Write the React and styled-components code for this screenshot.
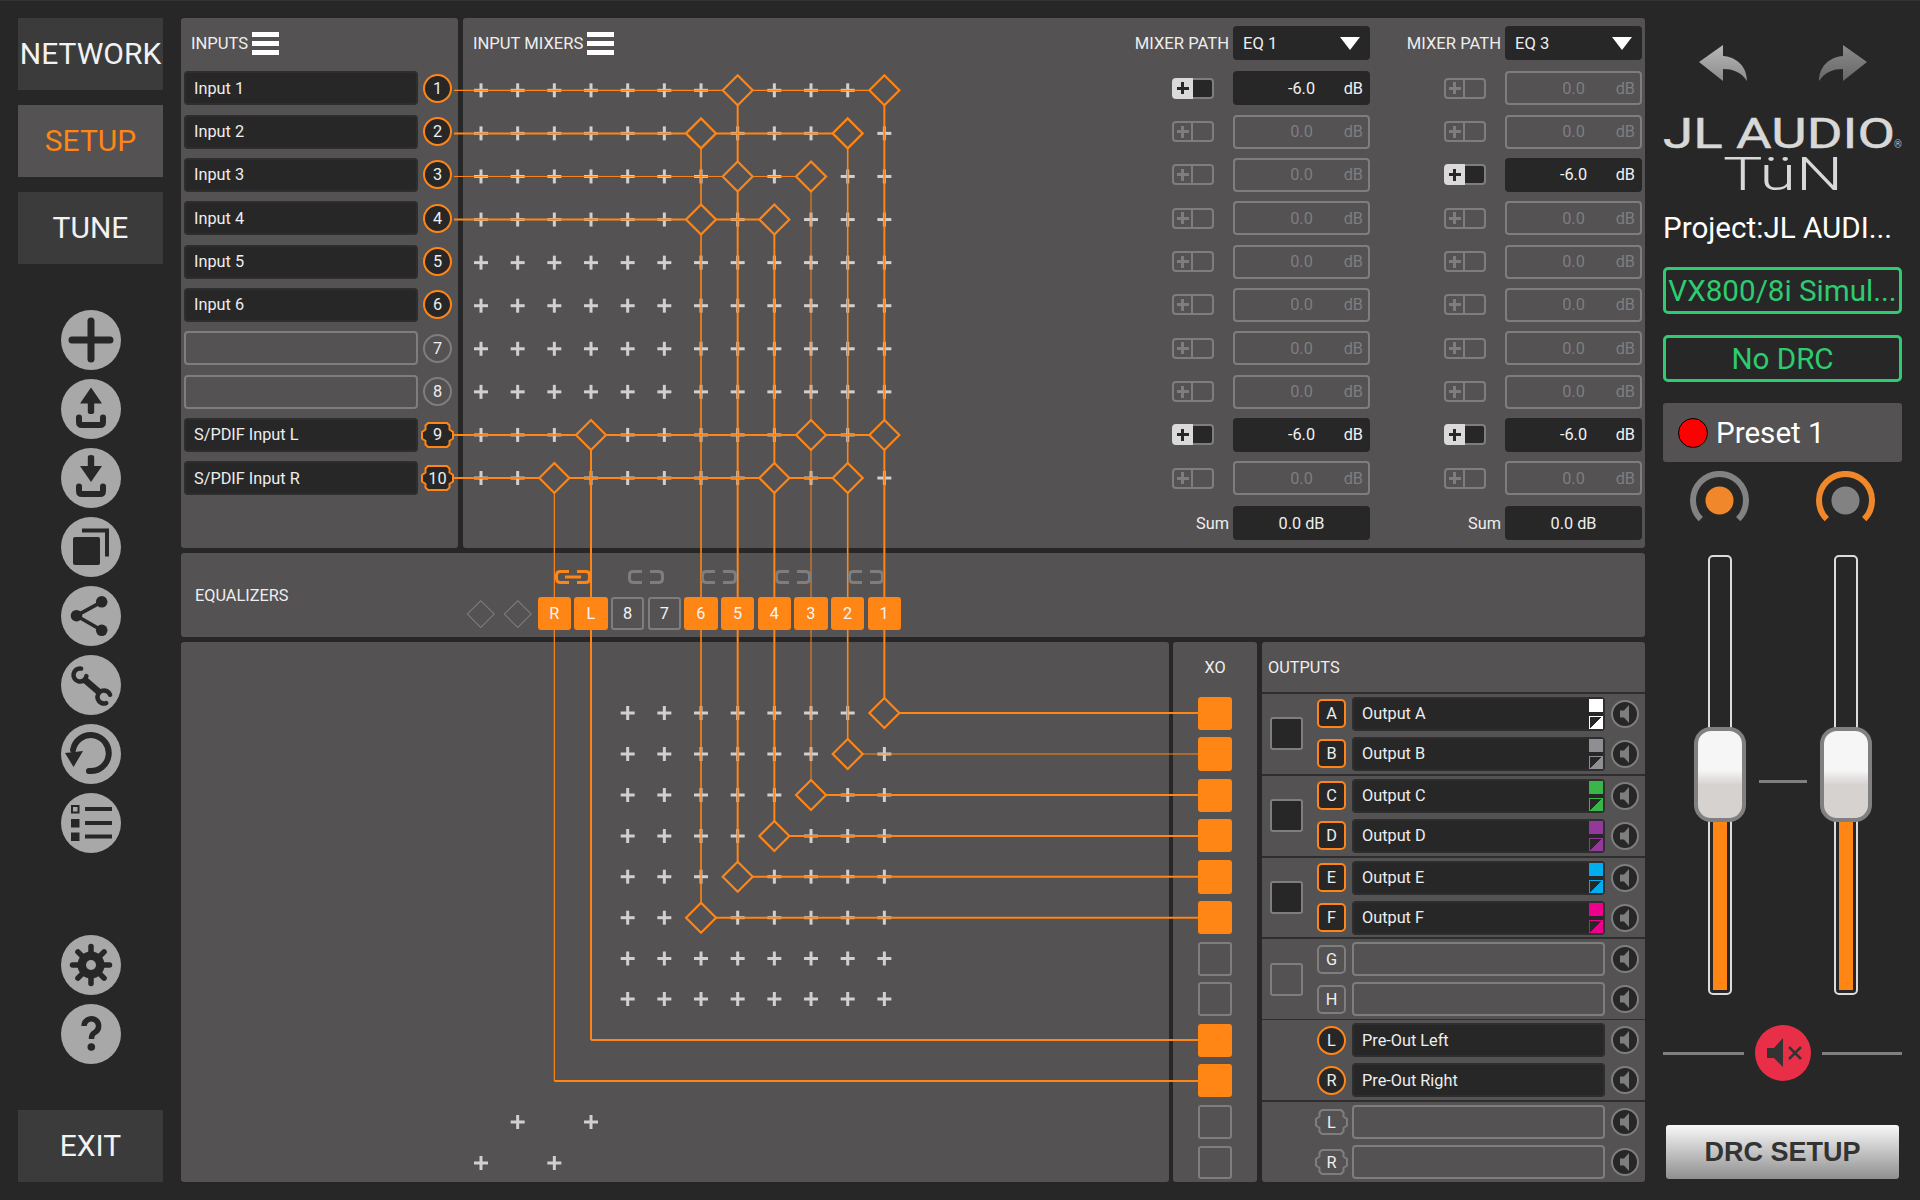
import React from "react";
import styled, { createGlobalStyle } from "styled-components";

const ORANGE = "#ff8515";
const GREY = "#7f7e7e";
const DARK = "#272727";
const PANEL = "#545253";

const GlobalStyle = createGlobalStyle`
  html, body {
    margin: 0;
    padding: 0;
    background: ${DARK};
  }
  * {
    box-sizing: border-box;
  }
`;

const Page = styled.div`
  position: relative;
  width: 1920px;
  height: 1200px;
  padding: 18px;
  display: grid;
  grid-template-columns: 145px 1464px 239px;
  column-gap: 18px;
  background: ${DARK};
  border-top: 1px solid #333;
  font-family: Roboto, "Liberation Sans", sans-serif;
  font-size: 16.3px;
  color: #eee;
  overflow: hidden;
`;

/* left column */
const NavColumn = styled.div`
  display: flex;
  flex-direction: column;
  margin-top: -1px;
`;

const NavTab = styled.div`
  height: 72px;
  margin-bottom: 15px;
  padding-bottom: 2px;
  display: flex;
  align-items: center;
  justify-content: center;
  background: ${(p) => (p.$active ? PANEL : "#3c3b3b")};
  color: ${(p) => (p.$active ? ORANGE : "#f2f2f2")};
  font-size: 30px;
`;

const IconStack = styled.div`
  display: flex;
  flex-direction: column;
  align-items: center;
  gap: 9px;
  margin-top: ${(p) => p.$top}px;
`;

const RoundIcon = styled.svg`
  display: block;
  width: 60px;
  height: 60px;
  border-radius: 50%;
  background: #a8a8a8;
`;

const ExitTab = styled(NavTab)`
  margin: auto 0 0;
`;

/* centre column */
const Centre = styled.div`
  display: grid;
  grid-template-rows: 530px 84px 540px;
  row-gap: 5px;
  margin-top: -1px;
`;

const TopRow = styled.div`
  display: grid;
  grid-template-columns: 277px 1fr;
  column-gap: 5px;
`;

const BottomRow = styled.div`
  display: grid;
  grid-template-columns: 988px 84px 1fr;
  column-gap: 4px;
`;

const Panel = styled.section`
  background: ${PANEL};
  border-radius: 3px;
`;

const InputsPanel = styled(Panel)`
  padding: 0 3px;
`;

const PanelHeader = styled.div`
  height: 53.34px;
  padding: 8px 0 11.34px 7px;
  display: flex;
  align-items: center;
  gap: 4px;
  font-size: 16.6px;
`;

const Burger = styled.span`
  display: block;
  width: 27px;
  height: 23px;
  background: linear-gradient(
    #fff 0 5px,
    transparent 5px 9px,
    #fff 9px 14px,
    transparent 14px 18px,
    #fff 18px 23px
  );
`;

const RowList = styled.div`
  display: grid;
  grid-auto-rows: 34px;
  row-gap: 9.33px;
`;

const InputRow = styled.div`
  display: grid;
  grid-template-columns: 234px 29px;
  column-gap: 5px;
  align-items: center;
`;

const NameField = styled.div`
  height: 34px;
  display: flex;
  align-items: center;
  padding-left: ${(p) => (p.$filled ? 8 : 0)}px;
  border-radius: 4px;
  background: ${(p) => (p.$filled ? DARK : "transparent")};
  border: 2px solid ${(p) => (p.$filled ? "#2e2e2e" : GREY)};
`;

const BadgeCell = styled.div`
  width: 29px;
  height: 29px;
  display: flex;
  align-items: center;
  justify-content: center;
`;

const CircleBadge = styled.div`
  flex: none;
  width: 29px;
  height: 29px;
  display: flex;
  align-items: center;
  justify-content: center;
  border-radius: ${(p) => (p.$square ? "5px" : "50%")};
  border: 2px solid ${(p) => (p.$on ? ORANGE : GREY)};
  background: ${(p) => (p.$on ? DARK : "transparent")};
`;

const NotchWrap = styled.div`
  flex: none;
  position: relative;
  width: 33px;
  height: 26px;
  display: flex;
  align-items: center;
  justify-content: center;
`;

const NotchShape = styled.svg`
  position: absolute;
  inset: 0;
`;

const NotchText = styled.span`
  position: relative;
`;

const MixerPanel = styled(Panel)`
  display: flex;
  justify-content: flex-end;
  gap: 38px;
  padding: 8px 3px 0 10px;
`;

const MixerTitle = styled.div`
  flex: 1;
  height: 34px;
  display: flex;
  align-items: center;
  gap: 4px;
  font-size: 16.6px;
`;

const PathColumn = styled.div`
  width: 234px;
  display: flex;
  flex-direction: column;
`;

const PathHeader = styled.div`
  height: 34px;
  margin-bottom: 11.34px;
  display: flex;
  align-items: center;
  justify-content: flex-end;
  gap: 4px;
  font-size: 16.6px;
  white-space: nowrap;
`;

const PathSelect = styled.div`
  flex: none;
  width: 137px;
  height: 34px;
  padding: 0 10px;
  display: flex;
  align-items: center;
  justify-content: space-between;
  background: ${DARK};
  border-radius: 4px;
`;

const Caret = styled.span`
  width: 0;
  height: 0;
  border-left: 10px solid transparent;
  border-right: 10px solid transparent;
  border-top: 13px solid #fff;
`;

const MixRow = styled.div`
  display: flex;
  align-items: center;
  justify-content: flex-end;
  gap: 19px;
`;

const Toggle = styled.div`
  width: 42px;
  height: 21px;
  display: flex;
`;

const ToggleKnob = styled.span`
  position: relative;
  width: 21px;
  height: 100%;
  border: 2px solid ${(p) => (p.$on ? "#dadada" : GREY)};
  border-radius: 4px 0 0 4px;
  background: ${(p) => (p.$on ? "#dadada" : "transparent")};
  &::before,
  &::after {
    content: "";
    position: absolute;
    background: ${(p) => (p.$on ? DARK : GREY)};
  }
  &::before {
    left: 2.5px;
    right: 2.5px;
    top: 7px;
    height: 3px;
  }
  &::after {
    top: 2.5px;
    bottom: 2.5px;
    left: 7px;
    width: 3px;
  }
`;

const ToggleTail = styled.span`
  flex: 1;
  border: 2px solid ${GREY};
  border-left: none;
  border-radius: 0 4px 4px 0;
  background: ${(p) => (p.$on ? DARK : "transparent")};
`;

const DbBox = styled.div`
  width: 137px;
  height: 34px;
  padding: 0 5px;
  display: grid;
  grid-template-columns: 1fr auto 1fr;
  align-items: center;
  border-radius: 4px;
  background: ${(p) => (p.$on ? DARK : "transparent")};
  border: 2px solid ${(p) => (p.$on ? DARK : GREY)};
  color: ${(p) => (p.$on ? "#f2f2f2" : GREY)};
`;

const DbUnit = styled.span`
  justify-self: end;
`;

const SumRow = styled.div`
  margin-top: 11px;
  display: flex;
  align-items: center;
  justify-content: flex-end;
  gap: 4px;
`;

const SumBox = styled.div`
  width: 137px;
  height: 34px;
  display: flex;
  align-items: center;
  justify-content: center;
  background: ${DARK};
  border-radius: 4px;
`;

/* equalizer strip */
const EqPanel = styled(Panel)`
  display: flex;
`;

const EqLabel = styled.div`
  flex: 0 0 283.3px;
  padding-left: 14px;
  display: flex;
  align-items: center;
`;

const EqGrid = styled.div`
  position: relative;
  z-index: 2;
  align-self: end;
  padding-bottom: 7px;
  display: grid;
  grid-template-columns: repeat(12, 33.34px);
  column-gap: 3.33px;
  row-gap: 13px;
  align-items: center;
  justify-items: center;
`;

const LinkCell = styled.div`
  grid-column: span 2;
  display: flex;
`;

const EqButton = styled.div`
  width: 33.34px;
  height: 33.34px;
  display: flex;
  align-items: center;
  justify-content: center;
  border-radius: 3px;
  background: ${(p) => (p.$on ? ORANGE : "transparent")};
  border: 2px solid ${(p) => (p.$on ? ORANGE : GREY)};
  color: #f4f4f4;
`;

const EqDiamond = styled.span`
  width: 19.5px;
  height: 19.5px;
  transform: rotate(45deg);
  border: 1.5px solid ${GREY};
`;

/* XO and outputs */
const XoPanel = styled(Panel)`
  display: flex;
  flex-direction: column;
`;

const XoTitle = styled.div`
  height: 50px;
  display: flex;
  align-items: center;
  justify-content: center;
`;

const XoGroup = styled.div`
  flex: 1;
  display: flex;
  flex-direction: column;
  align-items: center;
  justify-content: center;
  gap: 6.7px;
  border-top: 2px solid transparent;
`;

const XoButton = styled.div`
  width: 33.4px;
  height: 33.4px;
  border-radius: 3px;
  background: ${(p) => (p.$on ? ORANGE : "transparent")};
  border: 2px solid ${(p) => (p.$on ? ORANGE : GREY)};
`;

const OutputsPanel = styled(Panel)`
  margin-left: 1px;
  display: flex;
  flex-direction: column;
`;

const OutputsTitle = styled.div`
  height: 50px;
  padding-left: 6px;
  display: flex;
  align-items: center;
`;

const OutputGroup = styled.div`
  flex: 1;
  display: grid;
  grid-template-columns: 55px 1fr;
  align-items: center;
  border-top: ${(p) => (p.$thin ? "1px" : "2px")} solid #2f2e2e;
`;

const GroupSquare = styled.div`
  margin-left: 8px;
  width: 33px;
  height: 33px;
  border-radius: 3px;
  background: ${(p) => (p.$on ? DARK : "transparent")};
  border: 2px solid ${GREY};
`;

const OutputRows = styled.div`
  grid-column: 2;
  display: flex;
  flex-direction: column;
  gap: 6px;
`;

const OutputRow = styled.div`
  height: 34px;
  display: grid;
  grid-template-columns: 29px 253px 28px;
  column-gap: 6px;
  align-items: center;
`;

const OutputField = styled.div`
  height: 34px;
  display: flex;
  align-items: center;
  padding-left: ${(p) => (p.$filled ? 8 : 0)}px;
  border-radius: 4px;
  background: ${(p) => (p.$filled ? DARK : "transparent")};
  border: 2px solid ${(p) => (p.$filled ? "#2e2e2e" : GREY)};
`;

const Swatches = styled.div`
  margin-left: auto;
  display: flex;
  flex-direction: column;
  gap: 4px;
`;

const Swatch = styled.span`
  display: block;
  width: 14px;
  height: 13px;
  background: ${(p) => p.$color};
`;

const SwatchInvert = styled(Swatch)`
  border: 1.5px solid ${(p) => p.$color};
  background: linear-gradient(135deg, ${DARK} 50%, ${(p) => p.$color} 50%);
`;

const MuteButton = styled.div`
  width: 28px;
  height: 28px;
  border-radius: 50%;
  background: ${DARK};
  border: 2px solid ${GREY};
  display: flex;
  align-items: center;
  justify-content: center;
`;

/* right column */
const SideColumn = styled.div`
  display: flex;
  flex-direction: column;
  margin-top: -1px;
`;

const HistoryRow = styled.div`
  margin-top: 27px;
  display: flex;
  justify-content: center;
  gap: 72px;
`;

const Logo = styled.svg`
  display: block;
  margin-top: 27px;
`;

const ProjectName = styled.div`
  margin-top: 8px;
  height: 36px;
  line-height: 36px;
  font-size: 29.6px;
  color: #fff;
  white-space: nowrap;
`;

const StatusBox = styled.div`
  margin-top: 21px;
  height: 47px;
  display: flex;
  align-items: center;
  justify-content: center;
  border: 3px solid #2ecc71;
  border-radius: 5px;
  color: #2ecc71;
  font-size: 29.6px;
  white-space: nowrap;
`;

const PresetBox = styled.div`
  margin-top: 21px;
  height: 59px;
  padding-left: 15px;
  display: flex;
  align-items: center;
  gap: 8px;
  background: ${PANEL};
  border-radius: 3px;
  color: #fff;
  font-size: 29.6px;
`;

const PresetDot = styled.span`
  width: 30px;
  height: 30px;
  border-radius: 50%;
  background: #ff0000;
  border: 1px solid #000;
`;

const KnobRow = styled.div`
  margin-top: 9px;
  display: flex;
  justify-content: center;
  gap: 67px;
`;

const FaderRow = styled.div`
  margin-top: 30px;
  padding-left: 1px;
  display: flex;
  justify-content: center;
  gap: 27px;
`;

const FaderTrack = styled.div`
  position: relative;
  width: 24px;
  height: 440px;
  padding: 3px;
  display: flex;
  align-items: flex-end;
  border: 2.5px solid #dcdcdc;
  border-radius: 5px;
`;

const FaderFill = styled.div`
  width: 100%;
  height: 230px;
  background: ${ORANGE};
`;

const FaderThumb = styled.div`
  position: absolute;
  top: 170px;
  left: -16.5px;
  width: 52px;
  height: 95px;
  border: 4px solid #808080;
  border-radius: 17px;
  background: linear-gradient(#f7f6f6 0 45%, #d5d2d0 62% 100%);
`;

const FaderTick = styled.div`
  width: 48px;
  height: 3px;
  margin-top: 225px;
  background: #808080;
`;

const MasterRow = styled.div`
  margin-top: 30px;
  display: flex;
  align-items: center;
  gap: 11px;
`;

const MasterLine = styled.div`
  flex: 1;
  height: 3px;
  background: #808080;
`;

const MasterMute = styled.svg`
  display: block;
  border-radius: 50%;
  background: #e92f47;
`;

const DrcButton = styled.div`
  margin: 44px 3px 0;
  height: 54px;
  display: flex;
  align-items: center;
  justify-content: center;
  border-radius: 3px;
  background: linear-gradient(#f8f8f8, #8f8f8f);
  color: #333;
  font-family: "Liberation Sans", Arial, sans-serif;
  font-weight: 700;
  font-size: 27px;
`;

/* routing drawing that lies over the panels */
const RoutingLayer = styled.svg`
  position: absolute;
  top: 0;
  left: 0;
  z-index: 1;
  pointer-events: none;
`;

const INPUTS = [
  { name: "Input 1", n: 1 },
  { name: "Input 2", n: 2 },
  { name: "Input 3", n: 3 },
  { name: "Input 4", n: 4 },
  { name: "Input 5", n: 5 },
  { name: "Input 6", n: 6 },
  { name: "", n: 7 },
  { name: "", n: 8 },
  { name: "S/PDIF Input L", n: 9, notch: true },
  { name: "S/PDIF Input R", n: 10, notch: true },
];

const MIX_COLUMNS = [
  { path: "EQ 1", active: [0, 8] },
  { path: "EQ 3", active: [2, 8] },
];

const EQ_LABELS = [
  { label: "R", on: true },
  { label: "L", on: true },
  { label: "8", on: false },
  { label: "7", on: false },
  { label: "6", on: true },
  { label: "5", on: true },
  { label: "4", on: true },
  { label: "3", on: true },
  { label: "2", on: true },
  { label: "1", on: true },
];

const OUTPUT_GROUPS = [
  {
    square: "on",
    rows: [
      { id: "A", name: "Output A", color: "#ffffff", on: true },
      { id: "B", name: "Output B", color: "#8e8f93", on: true },
    ],
  },
  {
    square: "on",
    rows: [
      { id: "C", name: "Output C", color: "#39b54a", on: true },
      { id: "D", name: "Output D", color: "#93399a", on: true },
    ],
  },
  {
    square: "on",
    rows: [
      { id: "E", name: "Output E", color: "#00aeef", on: true },
      { id: "F", name: "Output F", color: "#ec008c", on: true },
    ],
  },
  {
    square: "off",
    rows: [
      { id: "G", name: "" },
      { id: "H", name: "" },
    ],
  },
  {
    thin: true,
    rows: [
      { id: "L", name: "Pre-Out Left", on: true, circle: true },
      { id: "R", name: "Pre-Out Right", on: true, circle: true },
    ],
  },
  {
    rows: [
      { id: "L", name: "", notch: true },
      { id: "R", name: "", notch: true },
    ],
  },
];

const XO_GROUPS = [
  [true, true],
  [true, true],
  [true, true],
  [false, false],
  [true, true],
  [false, false],
];

const colX = (i) => 481 + 36.67 * i;
const rowY = (i) => 89.3 + 43.08 * i;
const LOWER_Y = [712, 753, 794, 835, 875.7, 916.7, 957.5, 998];

// column index, first row, lower row index, widths of the vertical and of the outgoing line
const ROUTES = [
  { col: 11, from: 0, to: 0, w: 2, out: 2 },
  { col: 10, from: 1, to: 1, w: 1.6, out: 1 },
  { col: 9, from: 2, to: 2, w: 1, out: 2 },
  { col: 8, from: 3, to: 3, w: 2, out: 2 },
  { col: 7, from: 0, to: 4, w: 2, out: 2 },
  { col: 6, from: 1, to: 5, w: 1.6, out: 2 },
];

const INPUT_LINES = [
  { row: 0, end: 11, w: 1.2, nodes: [7, 11] },
  { row: 1, end: 10, w: 2, nodes: [6, 10] },
  { row: 2, end: 9, w: 1, nodes: [7, 9] },
  { row: 3, end: 8, w: 2, nodes: [6, 8] },
  { row: 8, end: 11, w: 2, nodes: [3, 9, 11] },
  { row: 9, end: 10, w: 2, nodes: [2, 8, 10] },
];

function Cross({ x, y }) {
  return (
    <g stroke="#d0d0d0" strokeWidth="3">
      <line x1={x - 7} y1={y} x2={x + 7} y2={y} />
      <line x1={x} y1={y - 7} x2={x} y2={y + 7} />
    </g>
  );
}

function Node({ x, y }) {
  const r = 15;
  return (
    <polygon
      points={`${x - r},${y} ${x},${y - r} ${x + r},${y} ${x},${y + r}`}
      fill={PANEL}
      stroke={ORANGE}
      strokeWidth="2.2"
    />
  );
}

function Routing() {
  const crosses = [];
  for (let r = 0; r < 10; r++) {
    for (let c = 0; c < 12; c++) crosses.push([colX(c), rowY(r)]);
  }
  LOWER_Y.forEach((y) => {
    for (let c = 4; c < 12; c++) crosses.push([colX(c), y]);
  });
  crosses.push([colX(1), 1121], [colX(3), 1121], [colX(0), 1162], [colX(2), 1162]);

  return (
    <RoutingLayer width="1920" height="1200" viewBox="0 0 1920 1200">
      {crosses.map(([x, y]) => (
        <Cross key={`${x}-${y}`} x={x} y={y} />
      ))}
      <g stroke={ORANGE} fill="none">
        {INPUT_LINES.map((l) => (
          <line key={l.row} x1="454" y1={rowY(l.row)} x2={colX(l.end)} y2={rowY(l.row)} strokeWidth={l.w} />
        ))}
        {ROUTES.map((r) => (
          <g key={r.col}>
            <line x1={colX(r.col)} y1={rowY(r.from)} x2={colX(r.col)} y2={LOWER_Y[r.to]} strokeWidth={r.w} />
            <line x1={colX(r.col)} y1={LOWER_Y[r.to]} x2="1198" y2={LOWER_Y[r.to]} strokeWidth={r.out} />
          </g>
        ))}
        <line x1={colX(3)} y1={rowY(8)} x2={colX(3)} y2="1039" strokeWidth="2" />
        <line x1={colX(3)} y1="1039" x2="1198" y2="1039" strokeWidth="2" />
        <line x1={colX(2)} y1={rowY(9)} x2={colX(2)} y2="1080" strokeWidth="1.2" />
        <line x1={colX(2)} y1="1080" x2="1198" y2="1080" strokeWidth="2" />
      </g>
      {INPUT_LINES.flatMap((l) =>
        l.nodes.map((c) => <Node key={`${l.row}-${c}`} x={colX(c)} y={rowY(l.row)} />)
      )}
      {ROUTES.map((r) => (
        <Node key={r.col} x={colX(r.col)} y={LOWER_Y[r.to]} />
      ))}
    </RoutingLayer>
  );
}

function Notch({ children, on }) {
  return (
    <NotchWrap>
      <NotchShape width="33" height="26" viewBox="0 0 33 26">
        <path
          d="M7 1H26L28.5 3.5V7.5L32 10V16.5L28.5 19V22.5L26 25H7L4.5 22.5V19L1 16.5V10L4.5 7.5V3.5Z"
          fill={on ? DARK : "none"}
          stroke={on ? ORANGE : GREY}
          strokeWidth="2"
        />
      </NotchShape>
      <NotchText>{children}</NotchText>
    </NotchWrap>
  );
}

function Speaker() {
  return (
    <svg width="24" height="24" viewBox="0 0 24 24">
      <polygon points="7,8.5 11,8.5 16,3 16,21 11,15.5 7,15.5" fill={GREY} />
    </svg>
  );
}

function ChainLink({ on }) {
  const color = on ? ORANGE : GREY;
  return (
    <svg width="70" height="14" viewBox="0 0 70 14" fill="none" stroke={color} strokeWidth="3" strokeLinejoin="round">
      <path d="M31 1.5H22.5Q18.5 1.5 18.5 5V9Q18.5 12.5 22.5 12.5H31" />
      <path d="M39 1.5H47.5Q51.5 1.5 51.5 5V9Q51.5 12.5 47.5 12.5H39" />
      {on && <path d="M27 7H43" />}
    </svg>
  );
}

function Arrow({ flip, color }) {
  const id = flip ? "redoFill" : "undoFill";
  return (
    <svg width="48" height="36" viewBox="0 0 48 36">
      <defs>
        <linearGradient id={id} x1="0" y1="0" x2="0" y2="1">
          <stop offset="0" stopColor={color} />
          <stop offset="1" stopColor={flip ? "#686868" : "#8c8c8c"} />
        </linearGradient>
      </defs>
      <path
        d="M0 17L24 0V11C38 12 48 22 48 36C42 27 34 24 24 24V36Z"
        fill={`url(#${id})`}
        transform={flip ? "matrix(-1 0 0 1 48 0)" : undefined}
      />
    </svg>
  );
}

function Knob({ ring, dot }) {
  return (
    <svg width="59" height="54" viewBox="0 0 59 54" fill="none">
      <path d="M10.8 48.2A26.5 26.5 0 1 1 48.2 48.2" stroke={ring} strokeWidth="6" />
      <circle cx="29.5" cy="29.5" r="14" fill={dot} />
    </svg>
  );
}

const ICON_PROPS = { viewBox: "0 0 60 60", fill: DARK };

const TOOL_ICONS = [
  <path key="add" d="M11 30H49M30 11V49" stroke={DARK} strokeWidth="7" strokeLinecap="round" />,
  <g key="up">
    <path d="M30 8.5L41 24.5H33.2V33Q33.2 35 30 35Q26.8 35 26.8 33V24.5H19Z" />
    <path d="M18 38.5V43Q18 46 21 46H39Q42 46 42 43V38.5" fill="none" stroke={DARK} strokeWidth="6" strokeLinecap="round" />
  </g>,
  <g key="down">
    <path d="M26.8 9Q26.8 7 30 7Q33.2 7 33.2 9V18H41L30 34L19 18H26.8Z" />
    <path d="M18 38.5V43Q18 46 21 46H39Q42 46 42 43V38.5" fill="none" stroke={DARK} strokeWidth="6" strokeLinecap="round" />
  </g>,
  <g key="copy">
    <rect x="12" y="20" width="27" height="28" rx="2" />
    <path d="M21 13.5H46V39.5" fill="none" stroke={DARK} strokeWidth="4" />
  </g>,
  <g key="share">
    <circle cx="15.5" cy="29.7" r="5.8" />
    <circle cx="40.7" cy="15.8" r="5.8" />
    <circle cx="40.7" cy="44.3" r="5.8" />
    <path d="M15.5 29.7L40.7 15.8M15.5 29.7L40.7 44.3" stroke={DARK} strokeWidth="3.6" />
  </g>,
  <g key="tool" fill="none" stroke={DARK}>
    <path d="M24 25L38 37" strokeWidth="6.5" />
    <path d="M20.1 13.6A6.5 6.5 0 1 0 25.4 21.1" strokeWidth="4.5" strokeLinecap="round" />
    <path d="M49.1 39.8A6.5 6.5 0 1 0 45.2 48.1" strokeWidth="4.5" strokeLinecap="round" />
  </g>,
  <g key="reset">
    <path d="M28 47A18 18 0 1 0 12 26" fill="none" stroke={DARK} strokeWidth="6" strokeLinecap="round" />
    <polygon points="4,29 22,27 12.5,43" />
  </g>,
  <g key="list">
    <rect x="11" y="13" width="6.5" height="6.5" fill="none" stroke={DARK} strokeWidth="2" />
    <rect x="10" y="26" width="8.5" height="8.5" />
    <rect x="10" y="39.5" width="8.5" height="8.5" />
    <path d="M24 16H51M24 30H51M24 43.5H51" stroke={DARK} strokeWidth="4" />
  </g>,
];

const GEAR_TEETH = [0, 45, 90, 135, 180, 225, 270, 315];

function App() {
  return (
    <Page>
      <GlobalStyle />
      <NavColumn>
        <NavTab>NETWORK</NavTab>
        <NavTab $active>SETUP</NavTab>
        <NavTab>TUNE</NavTab>
        <IconStack $top={31}>
          {TOOL_ICONS.map((icon) => (
            <RoundIcon key={icon.key} {...ICON_PROPS}>
              {icon}
            </RoundIcon>
          ))}
        </IconStack>
        <IconStack $top={82}>
          <RoundIcon {...ICON_PROPS}>
            {GEAR_TEETH.map((a) => (
              <line key={a} x1="30" y1="30" x2="30" y2="11.5" stroke={DARK} strokeWidth="5.5" strokeLinecap="round" transform={`rotate(${a} 30 30)`} />
            ))}
            <circle cx="30" cy="30" r="13.5" />
            <circle cx="30" cy="30" r="5" fill="#a8a8a8" />
          </RoundIcon>
          <RoundIcon {...ICON_PROPS}>
            <path d="M23 22A7.3 7.3 0 1 1 34.5 28C31.5 30 30.5 31 30.5 35" fill="none" stroke={DARK} strokeWidth="5.5" />
            <circle cx="30.3" cy="43" r="3.8" />
          </RoundIcon>
        </IconStack>
        <ExitTab>EXIT</ExitTab>
      </NavColumn>

      <Centre>
        <TopRow>
          <InputsPanel>
            <PanelHeader>
              INPUTS
              <Burger />
            </PanelHeader>
            <RowList>
              {INPUTS.map((input) => (
                <InputRow key={input.n}>
                  <NameField $filled={!!input.name}>{input.name}</NameField>
                  <BadgeCell>
                    {input.notch ? (
                      <Notch on>{input.n}</Notch>
                    ) : (
                      <CircleBadge $on={!!input.name}>{input.n}</CircleBadge>
                    )}
                  </BadgeCell>
                </InputRow>
              ))}
            </RowList>
          </InputsPanel>

          <MixerPanel>
            <MixerTitle>
              INPUT MIXERS
              <Burger />
            </MixerTitle>
            {MIX_COLUMNS.map((column) => (
              <PathColumn key={column.path}>
                <PathHeader>
                  MIXER PATH
                  <PathSelect>
                    {column.path}
                    <Caret />
                  </PathSelect>
                </PathHeader>
                <RowList>
                  {INPUTS.map((input, i) => {
                    const on = column.active.includes(i);
                    return (
                      <MixRow key={input.n}>
                        <Toggle>
                          <ToggleKnob $on={on} />
                          <ToggleTail $on={on} />
                        </Toggle>
                        <DbBox $on={on}>
                          <span />
                          <span>{on ? "-6.0" : "0.0"}</span>
                          <DbUnit>dB</DbUnit>
                        </DbBox>
                      </MixRow>
                    );
                  })}
                </RowList>
                <SumRow>
                  Sum
                  <SumBox>0.0 dB</SumBox>
                </SumRow>
              </PathColumn>
            ))}
          </MixerPanel>
        </TopRow>

        <EqPanel>
          <EqLabel>EQUALIZERS</EqLabel>
          <EqGrid>
            <LinkCell />
            {[true, false, false, false, false].map((on, i) => (
              <LinkCell key={i}>
                <ChainLink on={on} />
              </LinkCell>
            ))}
            <EqDiamond />
            <EqDiamond />
            {EQ_LABELS.map((eq) => (
              <EqButton key={eq.label} $on={eq.on}>
                {eq.label}
              </EqButton>
            ))}
          </EqGrid>
        </EqPanel>

        <BottomRow>
          <Panel />
          <XoPanel>
            <XoTitle>XO</XoTitle>
            {XO_GROUPS.map((group, i) => (
              <XoGroup key={i}>
                {group.map((on, j) => (
                  <XoButton key={j} $on={on} />
                ))}
              </XoGroup>
            ))}
          </XoPanel>
          <OutputsPanel>
            <OutputsTitle>OUTPUTS</OutputsTitle>
            {OUTPUT_GROUPS.map((group, i) => (
              <OutputGroup key={i} $thin={group.thin}>
                {group.square && <GroupSquare $on={group.square === "on"} />}
                <OutputRows>
                  {group.rows.map((row) => (
                    <OutputRow key={row.id + row.name}>
                      <BadgeCell>
                        {row.notch ? (
                          <Notch>{row.id}</Notch>
                        ) : (
                          <CircleBadge $on={row.on} $square={!row.circle}>
                            {row.id}
                          </CircleBadge>
                        )}
                      </BadgeCell>
                      <OutputField $filled={!!row.name}>
                        {row.name}
                        {row.color && (
                          <Swatches>
                            <Swatch $color={row.color} />
                            <SwatchInvert $color={row.color} />
                          </Swatches>
                        )}
                      </OutputField>
                      <MuteButton>
                        <Speaker />
                      </MuteButton>
                    </OutputRow>
                  ))}
                </OutputRows>
              </OutputGroup>
            ))}
          </OutputsPanel>
        </BottomRow>
      </Centre>

      <SideColumn>
        <HistoryRow>
          <Arrow color="#b8b8b8" />
          <Arrow flip color="#8a8a8a" />
        </HistoryRow>
        <Logo width="239" height="94" viewBox="0 -10 239 94">
          <text x="0" y="30" fontFamily="Roboto, sans-serif" fontSize="42" fill="#d8d8d8" stroke="#d8d8d8" strokeWidth="0.5" textLength="232" lengthAdjust="spacingAndGlyphs">
            JL AUDIO
          </text>
          <text x="231" y="30" fontFamily="Roboto, sans-serif" fontSize="10" fill="#bdbdbd">
            ®
          </text>
          <text x="60" y="72" fontFamily="Roboto, sans-serif" fontSize="46" fontWeight="300" fill="#d8d8d8" textLength="120" lengthAdjust="spacingAndGlyphs">
            TüN
          </text>
        </Logo>
        <ProjectName>Project:JL AUDI...</ProjectName>
        <StatusBox>VX800/8i Simul...</StatusBox>
        <StatusBox>No DRC</StatusBox>
        <PresetBox>
          <PresetDot />
          Preset 1
        </PresetBox>
        <KnobRow>
          <Knob ring="#828282" dot="#f0872a" />
          <Knob ring="#f0872a" dot="#828282" />
        </KnobRow>
        <FaderRow>
          <FaderTrack>
            <FaderFill />
            <FaderThumb />
          </FaderTrack>
          <FaderTick />
          <FaderTrack>
            <FaderFill />
            <FaderThumb />
          </FaderTrack>
        </FaderRow>
        <MasterRow>
          <MasterLine />
          <MasterMute width="56" height="56" viewBox="0 0 56 56">
            <polygon points="12,23 19,23 28,13 28,42 19,33 12,33" fill="#333" />
            <path d="M34 22L46 34M46 22L34 34" stroke="#333" strokeWidth="2.5" />
          </MasterMute>
          <MasterLine />
        </MasterRow>
        <DrcButton>DRC SETUP</DrcButton>
      </SideColumn>

      <Routing />
    </Page>
  );
}

export default App;
